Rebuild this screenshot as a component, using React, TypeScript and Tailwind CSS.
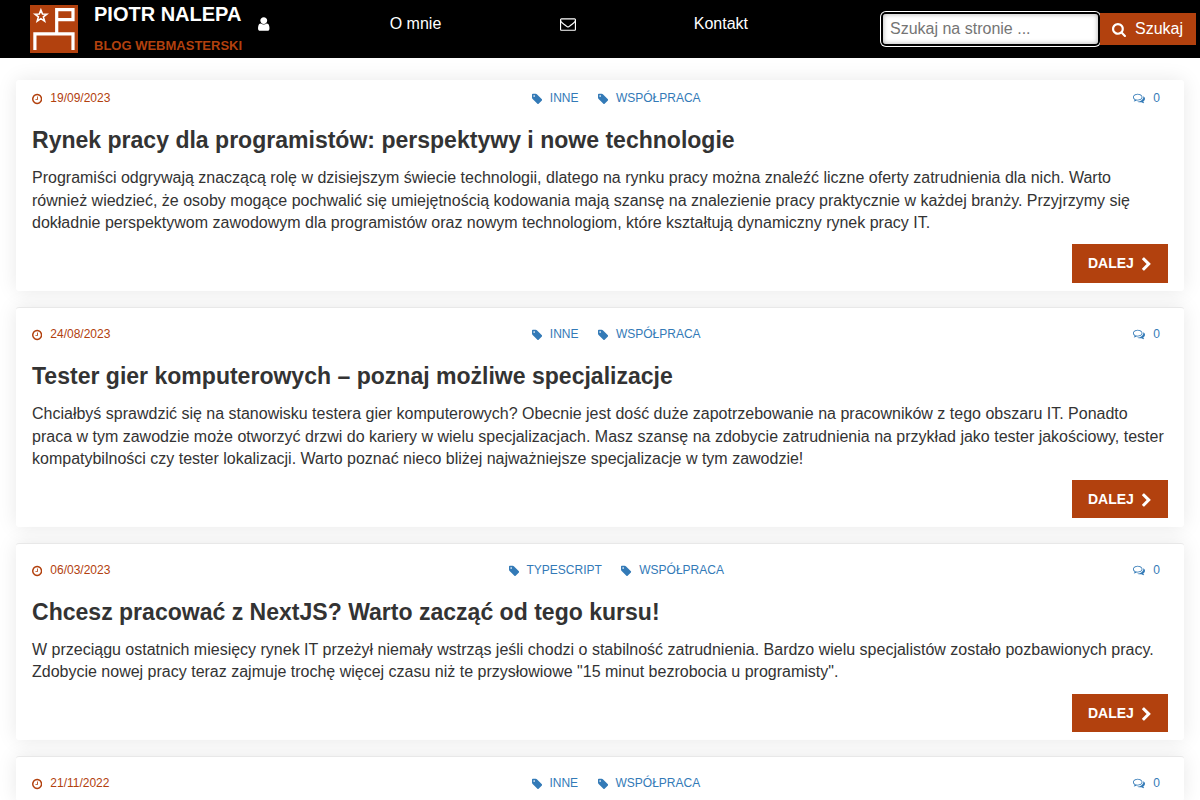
const icons = {
  clock: {
    box: "128 0 1536 1792",
    d: "M1024 544v448q0 14-9 23t-23 9h-320q-14 0-23-9t-9-23v-64q0-14 9-23t23-9h224v-352q0-14 9-23t23-9h64q14 0 23 9t9 23zm416 352q0-148-73-273t-198-198-273-73-273 73-198 198-73 273 73 273 198 198 273 73 273-73 198-198 73-273zm224 0q0 209-103 385.5t-279.5 279.5-385.5 103-385.5-103-279.5-279.5-103-385.5 103-385.5 279.5-279.5 385.5-103 385.5 103 279.5 279.5 103 385.5z",
  },
  tag: {
    box: "128 0 1536 1792",
    d: "M576 448q0-53-37.5-90.5t-90.5-37.5-90.5 37.5-37.5 90.5 37.5 90.5 90.5 37.5 90.5-37.5 37.5-90.5zm1067 576q0 53-37 90l-491 492q-39 37-91 37-53 0-90-37l-715-716q-38-37-64.5-101t-26.5-117v-416q0-52 38-90t90-38h416q53 0 117 26.5t102 64.5l715 714q37 39 37 91z",
  },
  comments: {
    box: "0 0 1792 1792",
    d: "M704 384q-153 0-286 52t-211.5 141-78.5 191q0 82 53 158t149 132l97 56-35 84q34-20 62-39l44-31 53 10q78 14 153 14 153 0 286-52t211.5-141 78.5-191-78.5-191-211.5-141-286-52zm0-128q191 0 353.5 68.5t256.5 186.5 94 257-94 257-256.5 186.5-353.5 68.5q-86 0-176-16-124 88-278 128-36 9-86 16h-3q-11 0-20.5-8t-11.5-21q-1-3-1-6.5t.5-6.5 2-6l2.5-5 3.5-5.5 4-5 4.5-5 4-4.5q5-6 23-25t26-29.5 22.5-29 25-38.5 20.5-44q-124-72-195-177t-71-224q0-139 94-257t256.5-186.5 353.5-68.5zm822 1169q10 24 20.5 44t25 38.5 22.5 29 26 29.5 23 25q1 1 4 4.5t4.5 5 4 5 3.5 5.5l2.5 5 2 6 .5 6.5-1 6.5q-3 14-13 22t-22 7q-50-7-86-16-154-40-278-128-90 16-176 16-271 0-472-132 58 4 88 4 161 0 309-45t264-129q125-92 192-212t67-254q0-77-23-152 129 71 204 178t75 230q0 120-71 224.5t-195 176.5z",
  },
  user: {
    box: "256 0 1280 1792",
    d: "M1536 1399q0 109-62.5 187t-150.5 78h-854q-88 0-150.5-78t-62.5-187q0-85 8.5-160.5t31.5-152 58.5-131 94-89 134.5-34.5q131 128 313 128t313-128q76 0 134.5 34.5t94 89 58.5 131 31.5 152 8.5 160.5zm-256-887q0 159-112.5 271.5t-271.5 112.5-271.5-112.5-112.5-271.5 112.5-271.5 271.5-112.5 271.5 112.5 112.5 271.5z",
  },
  envelope: {
    box: "0 0 1792 1792",
    d: "M1664 1504v-768q-32 36-69 66-268 206-426 338-51 43-83 67t-86.5 48.5-102.5 24.5h-2q-48 0-102.5-24.5t-86.5-48.5-83-67q-158-132-426-338-37-30-69-66v768q0 13 9.5 22.5t22.5 9.5h1472q13 0 22.5-9.5t9.5-22.5zm0-1051v-24.5l-.5-13-3-12.5-5.5-9-9-7.5-14-2.5h-1472q-13 0-22.5 9.5t-9.5 22.5q0 168 147 284 193 152 401 317 6 5 35 29.5t46 37.5 44.5 31.5 50.5 27.5 43 9h2q20 0 43-9t50.5-27.5 44.5-31.5 46-37.5 35-29.5q208-165 401-317 54-43 100.5-115.5t46.5-131.5zm128-37v1088q0 66-47 113t-113 47h-1472q-66 0-113-47t-47-113v-1088q0-66 47-113t113-47h1472q66 0 113 47t47 113z",
  },
  search: {
    box: "64 128 1664 1664",
    d: "M1216 832q0-185-131.5-316.5t-316.5-131.5-316.5 131.5-131.5 316.5 131.5 316.5 316.5 131.5 316.5-131.5 131.5-316.5zm512 832q0 52-38 90t-90 38q-54 0-90-38l-343-342q-179 124-399 124-143 0-273.5-55.5t-225-150-150-225-55.5-273.5 55.5-273.5 150-225 225-150 273.5-55.5 273.5 55.5 225 150 150 225 55.5 273.5q0 220-124 399l343 343q37 37 37 90z",
  },
  chevron: {
    box: "346 0 1036 1792",
    d: "M1363 877l-742 742q-19 19-45 19t-45-19l-166-166q-19-19-19-45t19-45l531-531-531-531q-19-19-19-45t19-45l166-166q19-19 45-19t45 19l742 742q19 19 19 45t-19 45z",
  },
};

function Icon({ name, className }: { name: keyof typeof icons; className: string }) {
  return (
    <svg viewBox={icons[name].box} fill="currentColor" className={`shrink-0 ${className}`} aria-hidden="true">
      <path d={icons[name].d} />
    </svg>
  );
}

const posts = [
  {
    date: "19/09/2023",
    tags: ["INNE", "WSPÓŁPRACA"],
    title: "Rynek pracy dla programistów: perspektywy i nowe technologie",
    text: "Programiści odgrywają znaczącą rolę w dzisiejszym świecie technologii, dlatego na rynku pracy można znaleźć liczne oferty zatrudnienia dla nich. Warto również wiedzieć, że osoby mogące pochwalić się umiejętnością kodowania mają szansę na znalezienie pracy praktycznie w każdej branży. Przyjrzymy się dokładnie perspektywom zawodowym dla programistów oraz nowym technologiom, które kształtują dynamiczny rynek pracy IT.",
  },
  {
    date: "24/08/2023",
    tags: ["INNE", "WSPÓŁPRACA"],
    title: "Tester gier komputerowych – poznaj możliwe specjalizacje",
    text: "Chciałbyś sprawdzić się na stanowisku testera gier komputerowych? Obecnie jest dość duże zapotrzebowanie na pracowników z tego obszaru IT. Ponadto praca w tym zawodzie może otworzyć drzwi do kariery w wielu specjalizacjach. Masz szansę na zdobycie zatrudnienia na przykład jako tester jakościowy, tester kompatybilności czy tester lokalizacji. Warto poznać nieco bliżej najważniejsze specjalizacje w tym zawodzie!",
  },
  {
    date: "06/03/2023",
    tags: ["TYPESCRIPT", "WSPÓŁPRACA"],
    title: "Chcesz pracować z NextJS? Warto zacząć od tego kursu!",
    text: 'W przeciągu ostatnich miesięcy rynek IT przeżył niemały wstrząs jeśli chodzi o stabilność zatrudnienia. Bardzo wielu specjalistów zostało pozbawionych pracy. Zdobycie nowej pracy teraz zajmuje trochę więcej czasu niż te przysłowiowe "15 minut bezrobocia u programisty".',
  },
  {
    date: "21/11/2022",
    tags: ["INNE", "WSPÓŁPRACA"],
  },
];

function Logo() {
  return (
    <svg viewBox="0 0 48 48" className="h-12 w-12 shrink-0" fill="none" stroke="#fff" aria-hidden="true">
      <path fill="#b2410e" stroke="none" d="M0 0h48v48H0z" />
      <path strokeWidth="3.2" d="M4.900 45V28.900H43V45M26.700 28V4.600H43V14.600H27" />
      <path strokeWidth="1.600" d="M10.900 5l1.600 4 4.300.2-3.400 2.700 1.200 4.200-3.700-2.400-3.700 2.400 1.200-4.200L5 9.200 9.300 9z" />
    </svg>
  );
}

function Header() {
  return (
    <header className="flex h-[58px] items-start bg-black pl-[30px] text-base text-white">
      <a href="#" className="flex w-[228px] gap-4 pt-[5px] font-bold">
        <Logo />
        <span className="-mt-[5px] flex flex-col whitespace-nowrap">
          <span className="text-[20px] leading-[29px]">PIOTR NALEPA</span>
          <span className="mt-[7px] text-[13px] leading-[19px] text-[#b2410e]">BLOG WEBMASTERSKI</span>
        </span>
      </a>
      <nav className="flex h-12 w-[490px] items-center justify-between">
        <Icon name="user" className="mr-0.5 h-4 w-[11.500px]" />
        <a href="#">O mnie</a>
        <Icon name="envelope" className="h-4 w-4" />
        <a href="#">Kontakt</a>
      </nav>
      <form className="mt-[13px] mr-1 ml-auto flex h-8">
        <input
          placeholder="Szukaj na stronie ..."
          className="mt-px h-[30px] w-[215px] rounded-[3px] bg-white px-[7px] text-base text-black shadow-[inset_0_0_5px_#aaa,0_0_0_2px_#000,0_0_0_3px_#fff] outline-none placeholder:text-[#757575]"
        />
        <button type="button" className="ml-[1.500px] flex w-[96.500px] items-center bg-[#b2410e] pl-[12.500px]">
          <Icon name="search" className="mt-px mr-[9px] h-[14px] w-[14px]" />
          Szukaj
        </button>
      </form>
    </header>
  );
}

function Post({ post, first }: { post: (typeof posts)[number]; first: boolean }) {
  return (
    <article
      className={`shrink-0 rounded-[3px] bg-white px-4 pb-[8.300px] shadow-[0_0_20px_#e8e8e8] ${first ? "pt-2" : "border-t border-[#e8e8e8] pt-4"}`}
    >
      <div className="flex h-5 items-center justify-between pr-2 text-xs text-[#337ab7]">
        <span className="flex items-center gap-2 text-[#b2410e]">
          <Icon name="clock" className="mt-0.5 h-3 w-[10.300px]" />
          {post.date}
        </span>
        <span className="mr-[11px] flex gap-[19.600px]">
          {post.tags.map((tag) => (
            <a key={tag} href="#" className="flex items-center gap-[7.500px]">
              <Icon name="tag" className="mt-0.5 h-3 w-[10.300px]" />
              {tag}
            </a>
          ))}
        </span>
        <a href="#" className="flex items-center gap-2">
          <Icon name="comments" className="h-3 w-3" />0
        </a>
      </div>
      {post.title && (
        <>
          <h2 className="mt-[19px] h-[26px] text-[23.040px] leading-[26px] font-bold">{post.title}</h2>
          <p className="mt-[14.200px] text-base leading-[22.500px]">{post.text}</p>
          <div className="mt-[9.600px] flex justify-end">
            <a href="#" className="flex h-[38.300px] w-24 items-center bg-[#b2410e] pl-4 text-sm font-bold text-white">
              DALEJ
              <Icon name="chevron" className="mt-[3px] ml-2 h-[15px] w-[8.700px]" />
            </a>
          </div>
        </>
      )}
    </article>
  );
}

export default function App() {
  return (
    <div className="h-screen overflow-hidden bg-white font-['Liberation_Sans',Arial,sans-serif] text-[#333]">
      <Header />
      <main className="flex flex-col gap-4 px-4 pt-[22px]">
        {posts.map((post, i) => (
          <Post key={post.date} post={post} first={i === 0} />
        ))}
      </main>
    </div>
  );
}
